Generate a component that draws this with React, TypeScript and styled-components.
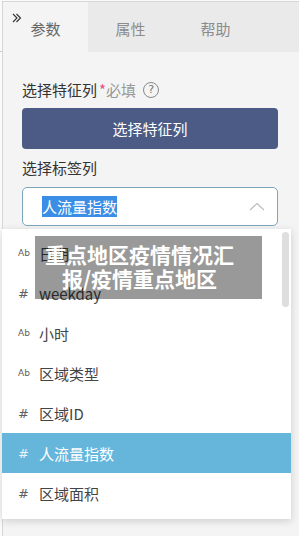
import React from "react";
import styled, { createGlobalStyle } from "styled-components";

const Global = createGlobalStyle`
  html, body { margin: 0; padding: 0; background: #fafafa; }
  body { font-family: "Noto Sans CJK SC", "Noto Sans", sans-serif; }
  #root { width: 299px; height: 536px; overflow: hidden; }
`;

const Page = styled.div`
  position: relative;
  display: flex;
  width: 299px;
  height: 536px;
  padding-top: 1px;
  box-sizing: border-box;
  background: #fafafa;
`;

const LeftStrip = styled.div`
  width: 2px;
  height: 50px;
  border-bottom: 1px solid #cfcfcf;
  flex: none;
`;

const Panel = styled.div`
  position: relative;
  flex: 1;
  display: flex;
  flex-direction: column;
  border-top: 1px solid #d6d6d6;
  border-left: 1px solid #d6d6d6;
  background: #f4f4f4;
`;

const TabBar = styled.div`
  display: flex;
  height: 50px;
  background: #eaeaea;
`;

const Tab = styled.div<{ $active?: boolean }>`
  width: 85px;
  display: flex;
  align-items: center;
  justify-content: center;
  padding-top: 2px;
  box-sizing: border-box;
  font-size: 15px;
  color: ${(p) => (p.$active ? "#666" : "#8c8c8c")};
  background: ${(p) => (p.$active ? "#f4f4f4" : "transparent")};
`;

const Collapse = styled.svg`
  position: absolute;
  left: 9px;
  top: 11px;
`;

const Body = styled.div`
  display: flex;
  flex-direction: column;
  padding: 27px 21px 0 19px;
`;

const Label = styled.div<{ $gap?: number }>`
  display: flex;
  align-items: center;
  font-size: 15px;
  line-height: 21px;
  color: #333;
  margin-top: ${(p) => p.$gap ?? 0}px;
`;

const Star = styled.span`
  color: #e0507e;
  margin-left: 2px;
`;

const Hint = styled.span`
  color: #999;
`;

const Help = styled.span`
  display: inline-flex;
  align-items: center;
  justify-content: center;
  width: 14px;
  height: 14px;
  margin-left: 7px;
  border: 1px solid #8a8a8a;
  border-radius: 50%;
  font-family: "DejaVu Sans", sans-serif;
  font-size: 11px;
  line-height: 1;
  color: #777;
`;

const PrimaryButton = styled.div`
  margin-top: 8px;
  height: 41px;
  border-radius: 4px;
  background: #4b5b86;
  color: #fff;
  font-size: 15px;
  display: flex;
  align-items: center;
  justify-content: center;
`;

const SelectWrap = styled.div`
  position: relative;
  margin-top: 9px;
`;

const Select = styled.div`
  height: 39px;
  box-sizing: border-box;
  border: 1px solid #7ba7bb;
  border-radius: 5px;
  background: #fff;
  display: flex;
  align-items: center;
  justify-content: space-between;
  padding: 0 12px 0 19px;
`;

const Selected = styled.span`
  font-size: 15px;
  line-height: 21px;
  background: #3a8ee6;
  color: #fff;
`;

const Dropdown = styled.div`
  position: absolute;
  top: calc(100% + 3px);
  left: -20px;
  width: 289px;
  height: 290px;
  box-sizing: border-box;
  padding-top: 4px;
  background: #fff;
  box-shadow: 0 2px 8px rgba(0, 0, 0, 0.16);
  overflow: hidden;
  z-index: 2;
`;

const Option = styled.div<{ $active?: boolean }>`
  height: 40px;
  display: flex;
  align-items: center;
  padding-left: 16px;
  font-size: 15px;
  color: ${(p) => (p.$active ? "#fff" : "#444")};
  background: ${(p) => (p.$active ? "#66b6dc" : "transparent")};
`;

const TypeIcon = styled.span<{ $kind: "text" | "num" }>`
  width: 21px;
  flex: none;
  font-family: "DejaVu Sans", sans-serif;
  font-size: ${(p) => (p.$kind === "text" ? "9px" : "13px")};
  color: inherit;
  opacity: 0.85;
`;

const Thumb = styled.div`
  position: absolute;
  right: 2px;
  top: 3px;
  width: 7px;
  height: 75px;
  border-radius: 4px;
  background: #dedede;
`;

const Watermark = styled.div`
  position: absolute;
  left: 35px;
  top: 236px;
  width: 227px;
  height: 63px;
  box-sizing: border-box;
  padding: 6px 27px 0 9px;
  background: rgba(0, 0, 0, 0.4);
  color: #fff;
  font-family: "Noto Sans CJK SC", sans-serif;
  font-weight: 700;
  font-size: 21px;
  line-height: 24px;
  text-align: center;
  z-index: 5;
`;

const options: { kind: "text" | "num"; label: string; active?: boolean }[] = [
  { kind: "text", label: "日期" },
  { kind: "num", label: "weekday" },
  { kind: "text", label: "小时" },
  { kind: "text", label: "区域类型" },
  { kind: "num", label: "区域ID" },
  { kind: "num", label: "人流量指数", active: true },
  { kind: "num", label: "区域面积" },
];

export default function App() {
  return (
    <>
      <Global />
      <Page>
        <LeftStrip />
        <Panel>
          <TabBar>
            <Tab $active>参数</Tab>
            <Tab>属性</Tab>
            <Tab>帮助</Tab>
          </TabBar>
          <Collapse width="10" height="10" viewBox="0 0 10 10">
            <path d="M1 1 L5 5 L1 9 M4.5 1 L8.5 5 L4.5 9" fill="none" stroke="#333" strokeWidth="1.1" />
          </Collapse>
          <Body>
            <Label>
              选择特征列<Star>*</Star>
              <Hint>必填</Hint>
              <Help>?</Help>
            </Label>
            <PrimaryButton>选择特征列</PrimaryButton>
            <Label $gap={8}>选择标签列</Label>
            <SelectWrap>
              <Select>
                <Selected>人流量指数</Selected>
                <svg width="16" height="9" viewBox="0 0 16 9">
                  <polyline points="1,8 8,1.5 15,8" fill="none" stroke="#bdbdbd" strokeWidth="1.2" />
                </svg>
              </Select>
              <Dropdown>
                {options.map((o) => (
                  <Option key={o.label} $active={o.active}>
                    <TypeIcon $kind={o.kind}>{o.kind === "text" ? "Ab" : "#"}</TypeIcon>
                    {o.label}
                  </Option>
                ))}
                <Thumb />
              </Dropdown>
            </SelectWrap>
          </Body>
        </Panel>
        <Watermark>重点地区疫情情况汇报/疫情重点地区</Watermark>
      </Page>
    </>
  );
}
